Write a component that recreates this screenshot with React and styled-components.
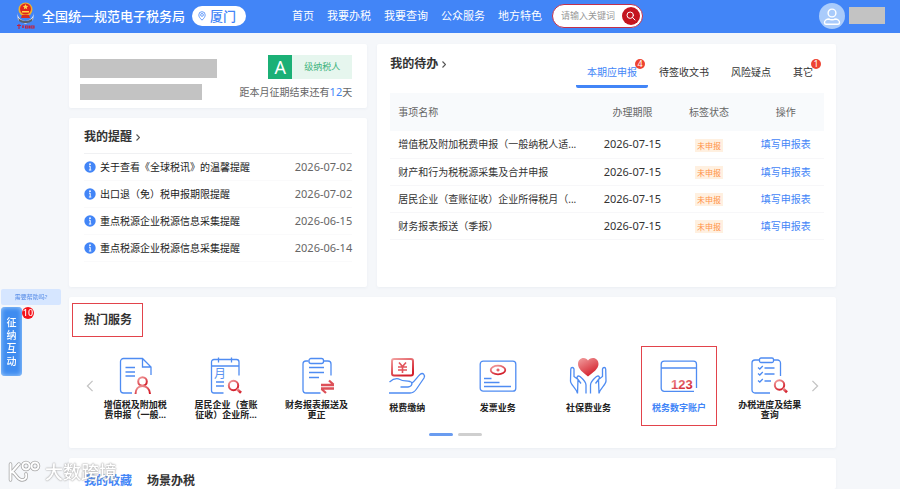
import React, { useState } from 'react'
import styled, { createGlobalStyle } from 'styled-components'

const GlobalStyle = createGlobalStyle`
  * {
    box-sizing: border-box;
  }
  body {
    margin: 0;
    background: #f5f7fa;
    color: #333;
    font-family: 'Noto Sans', 'Noto Sans CJK SC', sans-serif;
    font-size: 10px;
    line-height: 16px;
  }
  button, input {
    font-family: inherit;
  }
  h1, h2, ul {
    margin: 0;
    padding: 0;
  }
  ul {
    list-style: none;
  }
  a {
    text-decoration: none;
  }
`

const Header = styled.header`
  display: flex;
  align-items: center;
  height: 33px;
  padding: 0 15px 2px;
  background: #4285f7;
  color: white;
`
const SiteName = styled.h1`
  margin: 0 7px 0 6px;
  font-size: 13px;
  font-weight: 500;
  white-space: nowrap;
`
const Region = styled.button`
  display: flex;
  align-items: center;
  gap: 4px;
  height: 20px;
  padding: 0 10px 0 6px;
  border: 0;
  border-radius: 10px;
  background: white;
  color: #4285f7;
  font-size: 13px;
  font-weight: 500;
  white-space: nowrap;
`
const Nav = styled.nav`
  display: flex;
  gap: 13px;
  margin: 0 10px 0 46px;
  white-space: nowrap;
`
const NavLink = styled.a`
  color: white;
  font-size: 11px;
`
const Search = styled.form`
  display: flex;
  align-items: center;
  width: 91px;
  height: 24px;
  padding: 0 2px 0 8px;
  border: 1px solid #c2304c;
  border-radius: 12px;
  background: white;
`
const SearchInput = styled.input`
  flex: 1;
  min-width: 0;
  padding: 0;
  border: 0;
  outline: 0;
  background: none;
  font-size: 9px;
  &::placeholder {
    color: #999;
  }
`
const SearchButton = styled.button`
  display: flex;
  align-items: center;
  justify-content: center;
  width: 18px;
  height: 18px;
  padding: 0;
  border: 0;
  border-radius: 50%;
  background: #c4151f;
`
const Account = styled.div`
  display: flex;
  align-items: center;
  gap: 4px;
  margin-left: auto;
`
const Masked = styled.div`
  width: ${props => props.$width}px;
  height: ${props => props.$height}px;
  background: #c3c3c3;
`

const Main = styled.main`
  display: flex;
  flex-direction: column;
  gap: 10px;
  padding: 11px 64px 0 69px;
`
const Overview = styled.div`
  display: grid;
  grid-template-columns: 13fr 20fr;
  gap: 10px;
`
const Column = styled.div`
  display: flex;
  flex-direction: column;
  gap: 10px;
  min-width: 0;
`
const Card = styled.section`
  min-width: 0;
  background: white;
  border-radius: 2px;
  box-shadow: 0 1px 3px rgba(60, 80, 110, 0.05);
`
const Company = styled(Card)`
  display: flex;
  justify-content: space-between;
  padding: 11px 15px 8px 11px;
`
const CompanyNames = styled.div`
  display: flex;
  flex-direction: column;
  gap: 6px;
  padding-top: 4px;
`
const CompanyStatus = styled.div`
  display: flex;
  flex-direction: column;
  align-items: flex-end;
  gap: 5px;
  color: #666;
  white-space: nowrap;
  b {
    color: #4285f7;
    font-size: 11px;
    font-weight: 400;
  }
`
const Rating = styled.div`
  display: flex;
  height: 24px;
  line-height: 24px;
  background: #e6f6ee;
  color: #3fb37c;
  font-size: 9px;
  strong {
    width: 24px;
    background: #1bb076;
    color: white;
    font-size: 18px;
    font-weight: 400;
    text-align: center;
  }
  span {
    width: 60px;
    text-align: center;
  }
`

const Reminders = styled(Card)`
  flex: 1;
  padding: 11px 15px 0;
`
const Title = styled.h2`
  display: flex;
  align-items: center;
  gap: 4px;
  font-size: 12px;
  font-weight: 700;
  line-height: 16px;
`
const ReminderList = styled.ul`
  margin-top: 8px;
  border-top: 1px solid #f0f1f3;
`
const Reminder = styled.li`
  display: flex;
  align-items: center;
  gap: 4px;
  height: 27px;
  border-bottom: 1px solid #fafafb;
  a {
    flex: 1;
    color: #222;
    white-space: nowrap;
  }
  time {
    color: #666;
    font-size: 11px;
  }
`

const Todo = styled(Card)`
  padding: 12px 12px 47px 13px;
`
const TodoHead = styled.div`
  display: flex;
  justify-content: space-between;
  align-items: flex-start;
  padding-bottom: 5px;
`
const Tabs = styled.div`
  display: flex;
  padding-top: 6px;
`
const Tab = styled.button`
  height: 26px;
  padding: 0 11px 3px;
  border: 0;
  border-bottom: 3px solid ${props => props.$active ? '#4285f7' : 'transparent'};
  border-radius: 2px;
  background: none;
  color: ${props => props.$active ? '#4285f7' : '#333'};
  font-size: 10px;
  line-height: 16px;
  white-space: nowrap;
`
const TabText = styled.span`
  position: relative;
`
const Count = styled.span`
  position: absolute;
  top: ${props => props.$top}px;
  right: ${props => props.$right}px;
  width: ${props => props.$size}px;
  height: ${props => props.$size}px;
  border-radius: 50%;
  background: ${props => props.$color};
  color: white;
  font-size: 9px;
  line-height: ${props => props.$size}px;
  text-align: center;
`
const Table = styled.table`
  width: 100%;
  table-layout: fixed;
  border-collapse: collapse;
  th, td {
    padding: 0;
    font-weight: 400;
    text-align: center;
    white-space: nowrap;
  }
  th {
    height: 38px;
    background: #f8fafc;
    color: #666;
  }
  td {
    height: 27px;
    border-bottom: 1px solid #f7f7f9;
  }
  th:first-child, td:first-child {
    width: 47%;
    padding-left: 8px;
    text-align: left;
  }
  a {
    color: #4285f7;
  }
  time {
    font-size: 11px;
  }
`
const Tag = styled.span`
  display: inline-block;
  height: 13px;
  padding: 0 2px;
  background: #fff0e0;
  color: #ff9248;
  font-size: 8px;
  line-height: 13px;
  vertical-align: middle;
`

const Services = styled(Card)`
  padding: 6px 3px 12px;
`
const ServicesTitle = styled(Title)`
  display: inline-block;
  padding: 8px 10px 8px 11px;
  border: 1px solid #e2434b;
`
const Carousel = styled.div`
  display: flex;
  align-items: center;
  margin-top: 9px;
  padding: 0 14px;
`
const Arrow = styled.button`
  display: flex;
  width: 8px;
  padding: 0;
  border: 0;
  margin: 0 ${props => props.$next ? '0 0 -4px' : '-4px 0 0'};
  background: none;
`
const ServiceList = styled.ul`
  flex: 1;
  display: grid;
  grid-template-columns: repeat(8, 1fr);
  justify-items: center;
`
const Service = styled.button`
  display: flex;
  flex-direction: column;
  align-items: center;
  gap: 5px;
  width: 76px;
  height: 80px;
  padding: 10px 0 0;
  border: 1px solid ${props => props.$active ? '#e2434b' : 'transparent'};
  background: none;
  color: ${props => props.$active ? '#4285f7' : '#222'};
  font-size: 9px;
  font-weight: 700;
  line-height: 10px;
`
const ServiceName = styled.span`
  display: flex;
  align-items: center;
  max-width: 65px;
  min-height: 16px;
`
const Pages = styled.div`
  display: flex;
  justify-content: center;
  gap: 5px;
  margin-top: 7px;
  padding-left: 5px;
`
const PageButton = styled.button`
  width: 24px;
  height: 3px;
  padding: 0;
  border: 0;
  border-radius: 2px;
  background: ${props => props.$active ? '#6a9cf0' : '#cfcfcf'};
`
const Favorites = styled(Card)`
  display: flex;
  gap: 15px;
  padding: 15px 15px 0;
`
const FavoriteTab = styled.button`
  padding: 0;
  border: 0;
  background: none;
  color: ${props => props.$active ? '#4285f7' : '#333'};
  font-size: 12px;
  font-weight: 700;
  line-height: 16px;
`

const Helper = styled.aside`
  position: fixed;
  top: 289px;
  left: 1px;
`
const HelperTip = styled.div`
  width: 60px;
  height: 16px;
  border-radius: 2px;
  background: #d6e6ff;
  color: #5b8fe8;
  font-size: 6px;
  text-align: center;
`
const HelperButton = styled.button`
  display: block;
  width: 21px;
  height: 69px;
  margin-top: 2px;
  padding: 0 5px;
  border: 0;
  border-radius: 4px;
  background: #3f8cf0;
  box-shadow: inset 0 0 5px #a9d2fb;
  color: white;
  font-size: 10px;
  font-weight: 500;
  line-height: 13px;
`
const Watermark = styled.div`
  position: fixed;
  left: 8px;
  bottom: 5px;
  display: flex;
  align-items: center;
  gap: 4px;
  color: white;
  font-size: 18px;
  font-weight: 500;
  line-height: 24px;
  text-shadow: 0 0 2px #999, 0 0 1px #aaa;
  pointer-events: none;
`

const Emblem = () => (
  <svg width="21" height="29" viewBox="0 0 21 29">
    <path d="M2 12c1 5 5 8 8.500 8s7.500-3 8.500-8l-1 7-7.500 4L3 19z" fill="#e8edf5" />
    <path d="M3 17c5 4 10 4 15 0l-1 3c-4 3-9 3-13 0z" fill="#55606f" />
    <circle cx="10.500" cy="8.500" r="7" fill="#efb02e" />
    <circle cx="10.500" cy="8" r="5.500" fill="#e0261c" />
    <path d="M10.500 3l.8 1.800 2 .2-1.500 1.300.4 1.900-1.700-1-1.700 1 .4-1.900L7.700 5l2-.2zM7 10h7v1.500H7z" fill="#ffd34a" />
    <path d="M7 14h7l1 3H6z" fill="#d92b22" />
    <path d="M2 24.500h4M4 23v5M7 26h2M8 24v3M10.500 25h2.500v2h-2.500zM14.500 24.500v3M16 25h3v2h-3z" fill="none" stroke="#c3203c" strokeWidth="1.100" />
  </svg>
)

const PinIcon = () => (
  <svg width="8" height="10" viewBox="0 0 8 10" fill="none" stroke="#4285f7" strokeWidth="0.800">
    <path d="M4 9.200C2 7.200.8 5.700.8 3.900a3.200 3.200 0 0 1 6.400 0C7.200 5.700 6 7.200 4 9.200z" />
    <circle cx="4" cy="3.900" r="1.400" />
  </svg>
)

const SearchIcon = () => (
  <svg width="10" height="10" viewBox="0 0 10 10" fill="none" stroke="white" strokeLinecap="round">
    <circle cx="4.200" cy="4.200" r="3.200" />
    <path d="M6.600 6.600L9 9" />
  </svg>
)

const Avatar = () => (
  <svg width="26" height="26" viewBox="0 0 26 26">
    <circle cx="13" cy="13" r="13" fill="#a9cbfb" />
    <g fill="none" stroke="white" strokeWidth="1.400">
      <circle cx="13" cy="10" r="3.900" />
      <path d="M5.500 19.500c0-2 2-3.500 4.500-3.500 1 1 5 1 6 0 2.500 0 4.500 1.500 4.500 3.500 0 1-.5 1.800-1.500 1.800H7c-1 0-1.500-.8-1.500-1.800z" />
    </g>
  </svg>
)

const InfoIcon = () => (
  <svg width="12" height="12" viewBox="0 0 12 12">
    <circle cx="6" cy="6" r="5.700" fill="#4285f7" />
    <circle cx="6" cy="3.200" r="0.900" fill="white" />
    <path d="M5 5.200h1.200v3.600M4.900 9h2.400" fill="none" stroke="white" strokeWidth="1" />
  </svg>
)

const Chevron = ({ left, color = '#555', width = 4, height = 7 }) => (
  <svg width={width} height={height} viewBox="0 0 8 14" fill="none" stroke={color} strokeWidth={width > 5 ? 1.500 : 2.400}>
    <path d={left ? 'M7 1L1 7l6 6' : 'M1 1l6 6-6 6'} />
  </svg>
)

const Magnifier = ({ x, y }) => (
  <g stroke="url(#red)" fill="none">
    <circle cx={x} cy={y} r="4.700" strokeWidth="2" />
    <path d={`M${x + 3.500} ${y + 3.500}l4 3.800`} strokeWidth="2.600" />
  </g>
)

const palm = 'M17 36.500V28C17 25 14.500 22.500 11 19.500C8.500 18 7 20.500 9 22.500L12 26.500M9 22.500L5 19.500V12C4.500 10 2 10 1.800 12L1.500 24C1.500 28 7.500 31 8.500 36.500z'

const drawings = {
  person: (
    <>
      <path d="M16 36H7.500A3 3 0 0 1 4.500 33V4.500A3 3 0 0 1 7.500 1.500H26.500L35 10V18M26.500 1.500V10H35M9.500 10.500H19M9.500 15H19M9.500 19H19" />
      <g stroke="url(#red)" strokeWidth="2">
        <circle cx="26.500" cy="24.500" r="4.300" />
        <path d="M19.500 37c0-5 3-8 7-8s7.500 3 7.500 8" />
      </g>
    </>
  ),
  calendar: (
    <>
      <path d="M16.500 36H7A2.500 2.500 0 0 1 4.500 33.500V5A2.500 2.500 0 0 1 7 2.500H29.500A2.500 2.500 0 0 1 32 5V18.500M4.500 9H32M11.500 .5V5.500M24.500 .5V5.500M9 25H17M9 29H17" />
      <text x="7" y="21" fontSize="12" fontWeight="400" fill="#5b93f0" stroke="none">月</text>
      <Magnifier x={26.500} y={28.500} />
    </>
  ),
  transfer: (
    <>
      <path d="M22.500 36H8A3 3 0 0 1 5 33V7A3 3 0 0 1 8 4H10.500M25.500 4H30A3 3 0 0 1 33 7V18.500M11 10.500H26M11 15.500H26M11 20.500H21" />
      <rect x="11" y="1.500" width="14.500" height="5" rx="2" />
      <path d="M23 28H36M31 23.500L35.500 27.500M36 31.500H23M28 36L23.500 32" stroke="#dd5058" strokeWidth="2.300" />
    </>
  ),
  pay: (
    <>
      <rect x="4" y="2" width="21" height="16.500" rx="2" stroke="url(#red)" strokeWidth="2" />
      <path d="M11 5.500l3.500 4 3.500-4M10 10h9M10 13h9M14.500 9.500V16" stroke="#e2555c" strokeWidth="1.600" />
      <path d="M1.500 25C5 22 9 21 12 22.500C15 24.500 18 23.500 22 24.500C25 25.500 24.500 29.500 20 30H12.500M24 26C27 24 29 20 32 17.500C35 15 37.500 18 36 21L28.500 32C26.500 35 25 36 22 36H1" />
    </>
  ),
  invoice: (
    <>
      <rect x="1.200" y="4.200" width="35.600" height="30" rx="3" />
      <ellipse cx="19" cy="13" rx="7.300" ry="4.300" stroke="url(#red)" strokeWidth="1.800" />
      <path d="M17.500 13h3M19 11.500v3" stroke="#e2555c" />
      <path d="M5 21.500H12.500M5 25.500H20.500M5 29.500H32" />
    </>
  ),
  heart: (
    <>
      <path d="M19 19.500C14 15.500 9 12 9 7C9 3.500 11.500 1 14.500 1C16.500 1 18 2 19 3.500C20 2 21.500 1 24 1C27 1 29.500 3.500 29.500 7C29.500 12 24 15.500 19 19.500z" fill="url(#red)" stroke="none" />
      <path d={palm} />
      <path d={palm} transform="translate(38.500 0) scale(-1 1)" />
    </>
  ),
  account: (
    <>
      <path d="M34 34.300H4.200A3 3 0 0 1 1.200 31.300V7.200A3 3 0 0 1 4.200 4.200H33.500A3 3 0 0 1 36.500 7.200V31M1.200 11H36.500" />
      <text x="11" y="31.500" fontSize="13" fontFamily="Liberation Sans, sans-serif" fontWeight="700" fill="url(#red)" stroke="none">123</text>
    </>
  ),
  progress: (
    <>
      <path d="M19 36H4A3 3 0 0 1 1 33V6A3 3 0 0 1 4 3H8M22.500 3H26.500A3 3 0 0 1 29.500 6V19M13.500 11H23.500M13.500 17H23.500M13.500 24H20M7 10.500l1.800 1.500 3-3M7 16.500l1.800 1.500 3-3M7 23.500l1.800 1.500 3-3" />
      <rect x="8.500" y="1" width="14" height="4.500" rx="1.500" />
      <Magnifier x={28.500} y={28} />
    </>
  )
}

const ServiceIcon = ({ name }) => (
  <svg width="38" height="38" viewBox="0 0 38 38" fill="none" stroke="#4f8cf2" strokeWidth="1.300">
    {drawings[name]}
  </svg>
)

const navItems = ['首页', '我要办税', '我要查询', '公众服务', '地方特色']

const reminders = [
  { text: '关于查看《全球税讯》的温馨提醒', date: '2026-07-02' },
  { text: '出口退（免）税申报期限提醒', date: '2026-07-02' },
  { text: '重点税源企业税源信息采集提醒', date: '2026-06-15' },
  { text: '重点税源企业税源信息采集提醒', date: '2026-06-14' }
]

const tabs = [
  { text: '本期应申报', count: 4 },
  { text: '待签收文书' },
  { text: '风险疑点' },
  { text: '其它', count: 1 }
]

const todos = [
  '增值税及附加税费申报（一般纳税人适...',
  '财产和行为税税源采集及合并申报',
  '居民企业（查账征收）企业所得税月（...',
  '财务报表报送（季报）'
]

const services = [
  { icon: 'person', text: '增值税及附加税费申报（一般...' },
  { icon: 'calendar', text: '居民企业（查账征收）企业所...' },
  { icon: 'transfer', text: '财务报表报送及更正' },
  { icon: 'pay', text: '税费缴纳' },
  { icon: 'invoice', text: '发票业务' },
  { icon: 'heart', text: '社保费业务' },
  { icon: 'account', text: '税务数字账户' },
  { icon: 'progress', text: '办税进度及结果查询' }
]

const TopBar = () => (
  <Header>
    <Emblem />
    <SiteName>全国统一规范电子税务局</SiteName>
    <Region><PinIcon />厦门</Region>
    <Nav>
      {navItems.map(item => <NavLink key={item} href="#">{item}</NavLink>)}
    </Nav>
    <Search onSubmit={event => event.preventDefault()}>
      <SearchInput aria-label="搜索" placeholder="请输入关键词" />
      <SearchButton aria-label="搜索"><SearchIcon /></SearchButton>
    </Search>
    <Account>
      <Avatar />
      <Masked $width={36} $height={17} />
    </Account>
  </Header>
)

const TodoCard = () => {
  const [active, setActive] = useState(0)
  return (
    <Todo>
      <TodoHead>
        <Title>我的待办 <Chevron /></Title>
        <Tabs role="tablist">
          {tabs.map((tab, i) => (
            <Tab key={tab.text} role="tab" aria-selected={i === active} $active={i === active} onClick={() => setActive(i)}>
              <TabText>
                {tab.text}
                {tab.count && <Count $top={-6} $right={-8} $size={10} $color="#ee4433">{tab.count}</Count>}
              </TabText>
            </Tab>
          ))}
        </Tabs>
      </TodoHead>
      <Table>
        <thead>
          <tr>
            <th>事项名称</th>
            <th>办理期限</th>
            <th>标签状态</th>
            <th>操作</th>
          </tr>
        </thead>
        <tbody>
          {todos.map(todo => (
            <tr key={todo}>
              <td>{todo}</td>
              <td><time>2026-07-15</time></td>
              <td><Tag>未申报</Tag></td>
              <td><a href="#">填写申报表</a></td>
            </tr>
          ))}
        </tbody>
      </Table>
    </Todo>
  )
}

const App = () => (
  <>
    <GlobalStyle />
    <svg width="0" height="0" style={{ position: 'absolute' }} aria-hidden="true">
      <linearGradient id="red" x1="0" y1="0" x2="0.600" y2="1">
        <stop offset="0" stopColor="#f2a0a0" />
        <stop offset="1" stopColor="#d3202c" />
      </linearGradient>
    </svg>
    <TopBar />
    <Main>
      <Overview>
        <Column>
          <Company>
            <CompanyNames>
              <Masked $width={137} $height={19} />
              <Masked $width={122} $height={16} />
            </CompanyNames>
            <CompanyStatus>
              <Rating><strong>A</strong><span>级纳税人</span></Rating>
              <div>距本月征期结束还有<b>12</b>天</div>
            </CompanyStatus>
          </Company>
          <Reminders>
            <Title>我的提醒 <Chevron /></Title>
            <ReminderList>
              {reminders.map((item, i) => (
                <Reminder key={i}>
                  <InfoIcon />
                  <a href="#">{item.text}</a>
                  <time>{item.date}</time>
                </Reminder>
              ))}
            </ReminderList>
          </Reminders>
        </Column>
        <TodoCard />
      </Overview>
      <Services>
        <ServicesTitle>热门服务</ServicesTitle>
        <Carousel>
          <Arrow aria-label="上一页"><Chevron left color="#c4c4c4" width={8} height={12} /></Arrow>
          <ServiceList>
            {services.map(({ icon, text }) => (
              <li key={icon}>
                <Service $active={icon === 'account'}>
                  <ServiceIcon name={icon} />
                  <ServiceName>{text}</ServiceName>
                </Service>
              </li>
            ))}
          </ServiceList>
          <Arrow $next aria-label="下一页"><Chevron color="#c4c4c4" width={8} height={12} /></Arrow>
        </Carousel>
        <Pages>
          <PageButton $active aria-label="第1页" />
          <PageButton aria-label="第2页" />
        </Pages>
      </Services>
      <Favorites>
        <FavoriteTab $active>我的收藏</FavoriteTab>
        <FavoriteTab>场景办税</FavoriteTab>
      </Favorites>
    </Main>
    <Helper>
      <HelperTip>需要帮助吗?</HelperTip>
      <HelperButton>
        征纳互动
        <Count $top={18} $right={27} $size={12} $color="#f5131b">10</Count>
      </HelperButton>
    </Helper>
    <Watermark>
      <svg width="33" height="24" viewBox="0 0 33 24" fill="none" strokeLinecap="round">
        {['#a5a5a5', 'white'].map((color, i) => (
          <g key={color} stroke={color} strokeWidth={i ? 2 : 3.500}>
            <path d="M2.500 4V20M11 4L4 12C8 13 9 20 14 20C18 20 19 17 18 14" />
            <circle cx="18" cy="6" r="3.500" />
            <circle cx="27" cy="6" r="3.500" />
          </g>
        ))}
      </svg>
      大数跨境
    </Watermark>
  </>
)

export default App
